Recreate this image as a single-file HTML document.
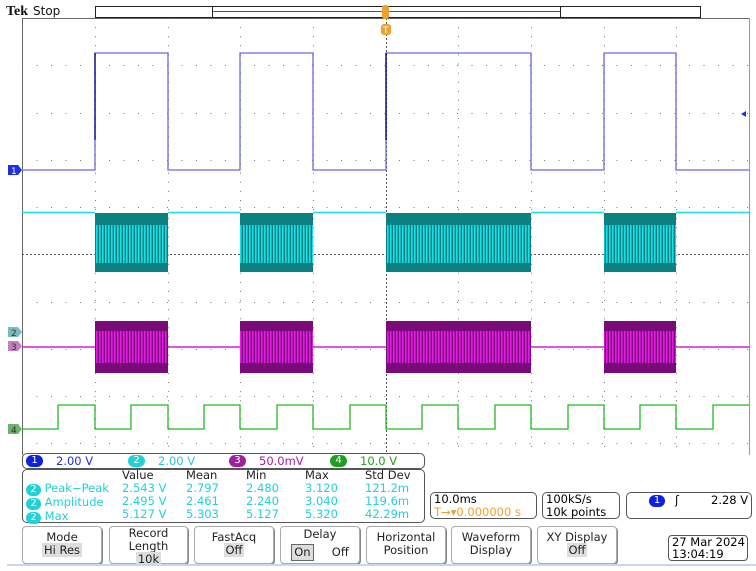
<!DOCTYPE html>
<html><head><meta charset="utf-8"><style>
body{margin:0;width:756px;height:571px;background:#fff;position:relative;overflow:hidden;font-family:"DejaVu Sans","Liberation Sans",sans-serif;}
.a{position:absolute;white-space:nowrap;}
.box{position:absolute;border:1px solid #555;border-radius:5px;background:#fff;white-space:nowrap;}
.btn{position:absolute;top:526px;height:37px;border:1px solid #aaa;border-radius:4px;background:#fff;font-size:11.5px;text-align:center;line-height:13px;color:#222;box-shadow:1px 1px 0 #888;white-space:nowrap;}
.hl{background:#ddd;padding:0 2px;}
.m{position:absolute;font-size:11.5px;color:#22d0d8;white-space:nowrap;}
.cb{display:inline-block;background:#22d0d8;color:#fff;border-radius:7px;width:15px;height:12px;line-height:12px;text-align:center;font-size:10px;}
</style></head><body>
<svg class="a" style="left:0;top:0" width="756" height="571">
<defs>
<pattern id="p2" x="0" y="0" width="3" height="571" patternUnits="userSpaceOnUse"><rect width="3" height="571" fill="#0a8080"/><rect x="0" y="225" width="1.6" height="38" fill="#19e0e6"/></pattern>
<pattern id="p3" x="0" y="0" width="3" height="571" patternUnits="userSpaceOnUse"><rect width="3" height="571" fill="#7a0a7a"/><rect x="0" y="331" width="1.6" height="32" fill="#e61ae6"/></pattern>
</defs>
<text x="6" y="15" font-family="Liberation Serif" font-weight="bold" font-size="14" fill="#111">Tek</text>
<text x="33" y="15" font-family="DejaVu Sans" font-size="12" fill="#111">Stop</text>
<rect x="95.5" y="6.5" width="605" height="11" fill="#fff" stroke="#222"/>
<rect x="212.5" y="6.5" width="348" height="11" fill="#fff" stroke="#222"/>
<line x1="213" y1="11.5" x2="560" y2="11.5" stroke="#4444dd"/>
<line x1="22.5" y1="18" x2="22.5" y2="455" stroke="#666"/>
<line x1="22" y1="18.5" x2="749" y2="18.5" stroke="#666"/>
<line x1="749.5" y1="18" x2="749.5" y2="455" stroke="#999"/>
<g stroke="#777" stroke-width="1" stroke-dasharray="1 8.1">
<line x1="95.5" y1="18" x2="95.5" y2="454"/><line x1="168.5" y1="18" x2="168.5" y2="454"/><line x1="240.5" y1="18" x2="240.5" y2="454"/><line x1="313.5" y1="18" x2="313.5" y2="454"/><line x1="458.5" y1="18" x2="458.5" y2="454"/><line x1="531.5" y1="18" x2="531.5" y2="454"/><line x1="604.5" y1="18" x2="604.5" y2="454"/><line x1="676.5" y1="18" x2="676.5" y2="454"/>
</g>
<g stroke="#777" stroke-dasharray="1 13.5">
<line x1="22" y1="65.5" x2="749" y2="65.5"/><line x1="22" y1="113.5" x2="749" y2="113.5"/><line x1="22" y1="160.5" x2="749" y2="160.5"/><line x1="22" y1="207.5" x2="749" y2="207.5"/><line x1="22" y1="302.5" x2="749" y2="302.5"/><line x1="22" y1="349.5" x2="749" y2="349.5"/><line x1="22" y1="396.5" x2="749" y2="396.5"/><line x1="22" y1="443.5" x2="749" y2="443.5"/>
</g>
<line x1="22" y1="254.5" x2="749" y2="254.5" stroke="#555" stroke-dasharray="2 2"/>
<line x1="386.5" y1="18" x2="386.5" y2="454" stroke="#555" stroke-dasharray="2 2"/>
<polyline fill="none" stroke="#6a6ae0" stroke-width="1.3" points="22,170 95,170 95,53 168,53 168,170 240,170 240,53 313,53 313,170 386,170 386,53 531,53 531,170 604,170 604,53 676,53 676,170 749,170"/>
<line x1="95" y1="53" x2="95" y2="140" stroke="#000080" stroke-width="1.3"/>
<line x1="386" y1="53" x2="386" y2="140" stroke="#000080" stroke-width="1.3"/>
<line x1="22" y1="212.5" x2="95" y2="212.5" stroke="#19e0e6" stroke-width="1.5"/>
<line x1="168" y1="212.5" x2="240" y2="212.5" stroke="#19e0e6" stroke-width="1.5"/>
<line x1="313" y1="212.5" x2="386" y2="212.5" stroke="#19e0e6" stroke-width="1.5"/>
<line x1="531" y1="212.5" x2="604" y2="212.5" stroke="#19e0e6" stroke-width="1.5"/>
<line x1="676" y1="212.5" x2="749" y2="212.5" stroke="#19e0e6" stroke-width="1.5"/>
<rect x="95" y="213" width="73" height="59" fill="url(#p2)"/>
<rect x="240" y="213" width="73" height="59" fill="url(#p2)"/>
<rect x="386" y="213" width="145" height="59" fill="url(#p2)"/>
<rect x="604" y="213" width="72" height="59" fill="url(#p2)"/>
<line x1="22" y1="347" x2="95" y2="347" stroke="#d020d0" stroke-width="1.5"/>
<line x1="168" y1="347" x2="240" y2="347" stroke="#d020d0" stroke-width="1.5"/>
<line x1="313" y1="347" x2="386" y2="347" stroke="#d020d0" stroke-width="1.5"/>
<line x1="531" y1="347" x2="604" y2="347" stroke="#d020d0" stroke-width="1.5"/>
<line x1="676" y1="347" x2="749" y2="347" stroke="#d020d0" stroke-width="1.5"/>
<rect x="95" y="321" width="73" height="52" fill="url(#p3)"/>
<rect x="240" y="321" width="73" height="52" fill="url(#p3)"/>
<rect x="386" y="321" width="145" height="52" fill="url(#p3)"/>
<rect x="604" y="321" width="72" height="52" fill="url(#p3)"/>
<polyline fill="none" stroke="#22bb22" stroke-width="1.3" points="22,429 58,429 58,405 95,405 95,429 131,429 131,405 168,405 168,429 204,429 204,405 240,405 240,429 277,429 277,405 313,405 313,429 350,429 350,405 386,405 386,429 422,429 422,405 458,405 458,429 495,429 495,405 531,405 531,429 568,429 568,405 604,405 604,429 640,429 640,405 676,405 676,429 713,429 713,405 749,405"/>
<path d="M8,165 h10 l4,5 l-4,5 h-10z" fill="#2030e0"/><text x="11" y="174" font-size="9" fill="#fff">1</text>
<path d="M8,327 h10 l4,5 l-4,5 h-10z" fill="#7abcbc"/><text x="11" y="336" font-size="9" fill="#333">2</text>
<path d="M8,341 h10 l4,5 l-4,5 h-10z" fill="#c080c0"/><text x="11" y="350" font-size="9" fill="#333">3</text>
<path d="M8,424 h10 l4,5 l-4,5 h-10z" fill="#70b070"/><text x="11" y="433" font-size="9" fill="#333">4</text>
<path d="M741,114 l5,-3 v6z" fill="#2030e0"/>
<rect x="382" y="5" width="7" height="14" rx="3" fill="#f0a030"/>
<rect x="381" y="24" width="10" height="11" rx="3" fill="#f0a030"/><text x="383" y="33" font-size="9" fill="#fff">T</text>
</svg>
<div class="box" style="left:22px;top:453px;width:401px;height:14px;font-size:11.5px;line-height:14px;">
<span class="a" style="left:3px;top:1px;width:17px;height:12px;border-radius:7px;background:#1020e0;color:#fff;font-size:10px;text-align:center;line-height:12px">1</span><span class="a" style="left:33px;color:#2030d0">2.00 V</span>
<span class="a" style="left:105px;top:1px;width:17px;height:12px;border-radius:7px;background:#22d0d8;color:#fff;font-size:10px;text-align:center;line-height:12px">2</span><span class="a" style="left:135px;color:#22c8d0">2.00 V</span>
<span class="a" style="left:206px;top:1px;width:17px;height:12px;border-radius:7px;background:#a020a0;color:#fff;font-size:10px;text-align:center;line-height:12px">3</span><span class="a" style="left:236px;color:#a020a0">50.0mV</span>
<span class="a" style="left:307px;top:1px;width:17px;height:12px;border-radius:7px;background:#20a020;color:#fff;font-size:10px;text-align:center;line-height:12px">4</span><span class="a" style="left:337px;color:#20a020">10.0 V</span>
</div>
<div class="box" style="left:22px;top:469px;width:401px;height:52px;"></div>
<div class="a" style="left:0;top:469px;font-size:11.5px;line-height:13px;">
<span class="a" style="left:122px;color:#222">Value</span><span class="a" style="left:186px;color:#222">Mean</span><span class="a" style="left:246px;color:#222">Min</span><span class="a" style="left:305px;color:#222">Max</span><span class="a" style="left:365px;color:#222">Std Dev</span>
</div>
<div class="m" style="left:26px;top:482px;line-height:13px"><span class="cb">2</span> Peak−Peak<br><span class="cb">2</span> Amplitude<br><span class="cb">2</span> Max</div>
<div class="m" style="left:122px;top:482px;line-height:13px">2.543 V<br>2.495 V<br>5.127 V</div>
<div class="m" style="left:186px;top:482px;line-height:13px">2.797<br>2.461<br>5.303</div>
<div class="m" style="left:246px;top:482px;line-height:13px">2.480<br>2.240<br>5.127</div>
<div class="m" style="left:305px;top:482px;line-height:13px">3.120<br>3.040<br>5.320</div>
<div class="m" style="left:365px;top:482px;line-height:13px">121.2m<br>119.6m<br>42.29m</div>
<div class="box" style="left:430px;top:492px;width:107px;height:27px;font-size:11.5px;line-height:13px;padding-left:3px;box-sizing:border-box">10.0ms<br><span style="color:#f0a030">T→▾0.000000 s</span></div>
<div class="box" style="left:542px;top:492px;width:78px;height:27px;font-size:11.5px;line-height:13px;padding-left:3px;box-sizing:border-box">100kS/s<br>10k points</div>
<div class="box" style="left:626px;top:492px;width:126px;height:27px;font-size:11.5px;line-height:13px;box-sizing:border-box"><span class="a" style="left:22px;top:2px;width:16px;height:12px;border-radius:7px;background:#1020e0;color:#fff;font-size:10px;text-align:center;line-height:12px">1</span><span class="a" style="left:48px;top:1px">ʃ</span><span class="a" style="left:84px;top:1px">2.28 V</span></div>
<div class="btn" style="left:22px;width:80px;padding-top:4px;box-sizing:border-box;height:38px">Mode<br><span class="hl">Hi Res</span></div>
<div class="btn" style="left:109px;width:79px;box-sizing:border-box;height:38px">Record<br>Length<br><span class="hl">10k</span></div>
<div class="btn" style="left:194px;width:80px;padding-top:4px;box-sizing:border-box;height:38px">FastAcq<br><span class="hl">Off</span></div>
<div class="btn" style="left:280px;width:80px;box-sizing:border-box;height:38px;padding-top:1px">Delay<br><span style="display:inline-block;border:1px solid #666;background:#ddd;padding:1px 2px;margin-top:3px">On</span>&nbsp;&nbsp;&nbsp;&nbsp;&nbsp;Off</div>
<div class="btn" style="left:366px;width:80px;padding-top:4px;box-sizing:border-box;height:38px">Horizontal<br>Position</div>
<div class="btn" style="left:451px;width:80px;padding-top:4px;box-sizing:border-box;height:38px">Waveform<br>Display</div>
<div class="btn" style="left:537px;width:80px;padding-top:4px;box-sizing:border-box;height:38px">XY Display<br><span class="hl">Off</span></div>
<div class="box" style="left:668px;top:535px;width:80px;height:26px;font-size:11.5px;line-height:12px;padding-left:3px;box-sizing:border-box;border-radius:4px">27 Mar 2024<br>13:04:19</div>
<div class="a" style="left:7px;top:564px;width:749px;height:2px;background:#c8d8ec"></div>
</body></html>
